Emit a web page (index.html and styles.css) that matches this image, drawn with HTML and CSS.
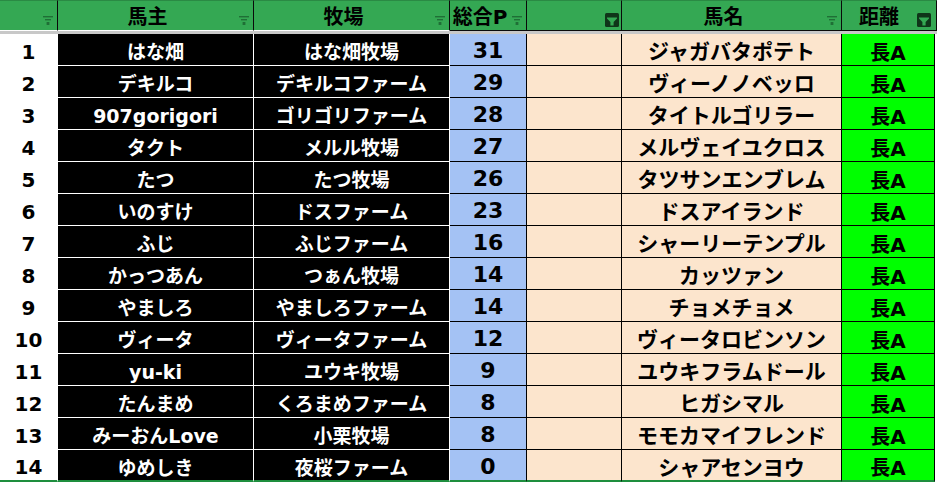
FILE: index.html
```html
<!DOCTYPE html>
<html lang="ja">
<head>
<meta charset="utf-8">
<title>Sheet</title>
<link rel="stylesheet" href="styles.css">
</head>
<body>
<div class="sheet">
  <div class="hcell h-num"><span class="hlabel"></span><svg class="fl" viewBox="0 0 10 9"><rect x="0" y="0" width="10" height="1.4"/><rect x="2" y="3" width="6" height="1.4"/><rect x="3.6" y="6" width="2.8" height="3"/></svg></div>
  <div class="hcell h-owner"><span class="hlabel">馬主</span><svg class="fl" viewBox="0 0 10 9"><rect x="0" y="0" width="10" height="1.4"/><rect x="2" y="3" width="6" height="1.4"/><rect x="3.6" y="6" width="2.8" height="3"/></svg></div>
  <div class="hcell h-farm"><span class="hlabel">牧場</span><svg class="fl" viewBox="0 0 10 9"><rect x="0" y="0" width="10" height="1.4"/><rect x="2" y="3" width="6" height="1.4"/><rect x="3.6" y="6" width="2.8" height="3"/></svg></div>
  <div class="hcell h-pts"><span class="hlabel">総合P</span><svg class="fl" viewBox="0 0 10 9"><rect x="0" y="0" width="10" height="1.4"/><rect x="2" y="3" width="6" height="1.4"/><rect x="3.6" y="6" width="2.8" height="3"/></svg></div>
  <div class="hcell h-blank"><span class="hlabel"></span><svg class="fa" viewBox="0 0 14 14"><rect x="0" y="0" width="14" height="14" rx="1.5" class="fa-bg"/><polygon points="2,4.5 12,4.5 12,5.6 8.6,9 8.6,12.5 5.4,12.5 5.4,9 2,5.6" class="fa-fg"/></svg></div>
  <div class="hcell h-horse"><span class="hlabel">馬名</span><svg class="fl" viewBox="0 0 10 9"><rect x="0" y="0" width="10" height="1.4"/><rect x="2" y="3" width="6" height="1.4"/><rect x="3.6" y="6" width="2.8" height="3"/></svg></div>
  <div class="hcell h-dist"><span class="hlabel">距離</span><svg class="fa" viewBox="0 0 14 14"><rect x="0" y="0" width="14" height="14" rx="1.5" class="fa-bg"/><polygon points="2,4.5 12,4.5 12,5.6 8.6,9 8.6,12.5 5.4,12.5 5.4,9 2,5.6" class="fa-fg"/></svg></div>

  <div class="band"></div>

  <div class="cell c-num">1</div><div class="cell c-owner">はな畑</div><div class="cell c-farm">はな畑牧場</div><div class="cell c-pts">31</div><div class="cell c-blank"></div><div class="cell c-horse">ジャガバタポテト</div><div class="cell c-dist">長A</div>
  <div class="cell c-num">2</div><div class="cell c-owner">デキルコ</div><div class="cell c-farm">デキルコファーム</div><div class="cell c-pts">29</div><div class="cell c-blank"></div><div class="cell c-horse">ヴィーノノベッロ</div><div class="cell c-dist">長A</div>
  <div class="cell c-num">3</div><div class="cell c-owner">907gorigori</div><div class="cell c-farm">ゴリゴリファーム</div><div class="cell c-pts">28</div><div class="cell c-blank"></div><div class="cell c-horse">タイトルゴリラー</div><div class="cell c-dist">長A</div>
  <div class="cell c-num">4</div><div class="cell c-owner">タクト</div><div class="cell c-farm">メルル牧場</div><div class="cell c-pts">27</div><div class="cell c-blank"></div><div class="cell c-horse">メルヴェイユクロス</div><div class="cell c-dist">長A</div>
  <div class="cell c-num">5</div><div class="cell c-owner">たつ</div><div class="cell c-farm">たつ牧場</div><div class="cell c-pts">26</div><div class="cell c-blank"></div><div class="cell c-horse">タツサンエンブレム</div><div class="cell c-dist">長A</div>
  <div class="cell c-num">6</div><div class="cell c-owner">いのすけ</div><div class="cell c-farm">ドスファーム</div><div class="cell c-pts">23</div><div class="cell c-blank"></div><div class="cell c-horse">ドスアイランド</div><div class="cell c-dist">長A</div>
  <div class="cell c-num">7</div><div class="cell c-owner">ふじ</div><div class="cell c-farm">ふじファーム</div><div class="cell c-pts">16</div><div class="cell c-blank"></div><div class="cell c-horse">シャーリーテンプル</div><div class="cell c-dist">長A</div>
  <div class="cell c-num">8</div><div class="cell c-owner">かっつあん</div><div class="cell c-farm">つぁん牧場</div><div class="cell c-pts">14</div><div class="cell c-blank"></div><div class="cell c-horse">カッツァン</div><div class="cell c-dist">長A</div>
  <div class="cell c-num">9</div><div class="cell c-owner">やましろ</div><div class="cell c-farm">やましろファーム</div><div class="cell c-pts">14</div><div class="cell c-blank"></div><div class="cell c-horse">チョメチョメ</div><div class="cell c-dist">長A</div>
  <div class="cell c-num">10</div><div class="cell c-owner">ヴィータ</div><div class="cell c-farm">ヴィータファーム</div><div class="cell c-pts">12</div><div class="cell c-blank"></div><div class="cell c-horse">ヴィータロビンソン</div><div class="cell c-dist">長A</div>
  <div class="cell c-num">11</div><div class="cell c-owner">yu-ki</div><div class="cell c-farm">ユウキ牧場</div><div class="cell c-pts">9</div><div class="cell c-blank"></div><div class="cell c-horse">ユウキフラムドール</div><div class="cell c-dist">長A</div>
  <div class="cell c-num">12</div><div class="cell c-owner">たんまめ</div><div class="cell c-farm">くろまめファーム</div><div class="cell c-pts">8</div><div class="cell c-blank"></div><div class="cell c-horse">ヒガシマル</div><div class="cell c-dist">長A</div>
  <div class="cell c-num">13</div><div class="cell c-owner">みーおんLove</div><div class="cell c-farm">小栗牧場</div><div class="cell c-pts">8</div><div class="cell c-blank"></div><div class="cell c-horse">モモカマイフレンド</div><div class="cell c-dist">長A</div>
  <div class="cell c-num last">14</div><div class="cell c-owner last">ゆめしき</div><div class="cell c-farm last">夜桜ファーム</div><div class="cell c-pts last">0</div><div class="cell c-blank last"></div><div class="cell c-horse last">シャアセンヨウ</div><div class="cell c-dist last">長A</div>
</div>
</body>
</html>
```

FILE: styles.css
```css
* { box-sizing: border-box; }
html, body {
  margin: 0;
  padding: 0;
  background: #ffffff;
}
body {
  width: 937px;
  height: 483px;
  overflow: hidden;
  font-family: "DejaVu Sans", "Noto Sans CJK JP", sans-serif;
  font-weight: 700;
}
.sheet {
  display: grid;
  grid-template-columns: 58px 196px 196px 77px 95px 220px 93px;
  grid-template-rows: 31px 3px repeat(14, 32px);
  width: 935px;
}
.hcell {
  background: #34a853;
  border-top: 1px solid #2a8a44;
  border-right: 1px solid #0a0a0a;
  border-bottom: 1px solid #ffffff;
  display: flex;
  align-items: flex-start;
  color: #000;
  font-size: 20px;
  line-height: 29px;
  padding-top: 2px;
}
.h-pts, .h-blank, .h-horse, .h-dist { border-bottom-color: #0a0a0a; }
.h-dist { margin-right: -2px; }
.hlabel {
  flex: 1;
  text-align: center;
  white-space: nowrap;
  padding-left: 2px;
}
.fl {
  width: 10px;
  height: 9px;
  margin: 13px 4px 0 4px;
  fill: #1f6f36;
  flex: none;
}
.fa {
  width: 14px;
  height: 14px;
  margin: 10px 5px 0 3px;
  flex: none;
}
.h-blank .fa { margin-right: 2px; }
.fa-bg { fill: #0f3519; }
.fa-fg { fill: #34a853; }
.band {
  grid-column: 1 / -1;
  background: #c8c8c8;
  margin-right: -2px;
}
.cell {
  display: flex;
  align-items: center;
  justify-content: center;
  white-space: nowrap;
  border-right: 1px solid #000;
  border-bottom: 1px solid #000;
  line-height: 1;
  padding-top: 6px;
}
.c-num {
  background: #fff;
  color: #000;
  border-color: #fff;
  font-size: 20px;
  padding-top: 4px;
}
.c-owner, .c-farm {
  background: #000;
  color: #fff;
  border-color: #fff;
  font-size: 19px;
}
.c-pts {
  background: #a4c2f4;
  color: #000;
  font-size: 22px;
  padding-top: 3px;
}
.c-blank, .c-horse {
  background: #fce5cd;
  color: #000;
}
.c-horse { font-size: 21px; }
.c-dist {
  background: #00ff00;
  color: #000;
  font-size: 20px;
}
.cell.last {
  border-bottom: 2px solid #1e8e3e;
}
```
